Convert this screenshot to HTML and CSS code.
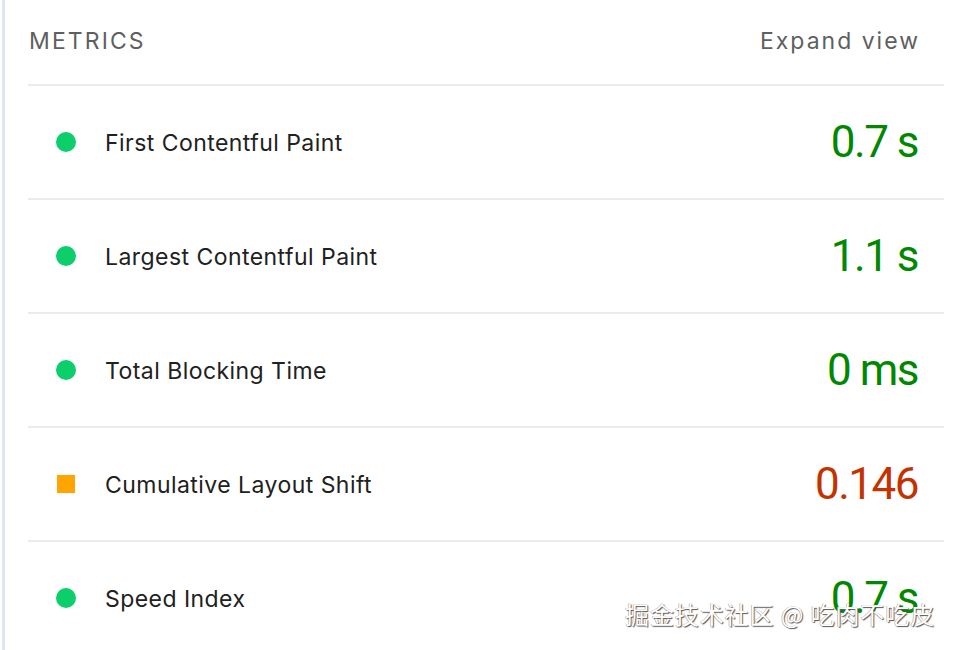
FILE: index.html
```html
<!DOCTYPE html>
<html>
<head>
<meta charset="utf-8">
<link rel="stylesheet" href="styles.css">
</head>
<body>
<div class="panel">
  <div class="header">
    <div class="title">METRICS</div>
    <div class="toggle">Expand view</div>
  </div>
  <div class="metric">
    <span class="ind ind-pass"></span>
    <span class="label">First Contentful Paint</span>
    <span class="value pass">0.7 s</span>
  </div>
  <div class="metric">
    <span class="ind ind-pass"></span>
    <span class="label">Largest Contentful Paint</span>
    <span class="value pass">1.1 s</span>
  </div>
  <div class="metric">
    <span class="ind ind-pass"></span>
    <span class="label">Total Blocking Time</span>
    <span class="value pass">0 ms</span>
  </div>
  <div class="metric">
    <span class="ind ind-average"></span>
    <span class="label">Cumulative Layout Shift</span>
    <span class="value average">0.146</span>
  </div>
  <div class="metric">
    <span class="ind ind-pass"></span>
    <span class="label">Speed Index</span>
    <span class="value pass">0.7 s</span>
  </div>
</div>
<div class="watermark">掘金技术社区 @ 吃肉不吃皮</div>
</body>
</html>
```
FILE: styles.css
```css
html, body {
  margin: 0;
  padding: 0;
  background: #ffffff;
  overflow: hidden;
  height: 650px;
}
body {
  font-family: Inter, Roboto, "Liberation Sans", Arial, sans-serif;
  position: relative;
}
.panel {
  margin-left: 2px;
  border-left: 3px solid #dce6f8;
  padding: 0 10px 0 23px;
  height: 650px;
  box-sizing: border-box;
}
.header {
  display: flex;
  align-items: center;
  justify-content: space-between;
  height: 82px;
  padding: 0 24px 2px 1px;
  border-bottom: 2px solid #ebebeb;
}
.title {
  font-size: 23px;
  letter-spacing: 2.1px;
  color: #5f5f5f;
}
.toggle {
  font-size: 23px;
  letter-spacing: 2px;
  color: #5f5f5f;
}
.metric {
  display: flex;
  align-items: center;
  height: 112px;
  border-bottom: 2px solid #ebebeb;
  padding: 0 26px 0 28px;
}
.ind {
  flex: none;
  width: 20px;
  height: 20px;
  margin-right: 29px;
}
.ind-pass {
  background: #0cce6b;
  border-radius: 50%;
}
.ind-average {
  width: 18px;
  height: 18px;
  margin-left: 1px;
  margin-right: 30px;
  background: #ffa400;
}
.label {
  flex: 1;
  padding-top: 2px;
  font-size: 23px;
  letter-spacing: 0.45px;
  color: #212121;
}
.value {
  font-family: Roboto, "Liberation Sans", Arial, sans-serif;
  font-size: 44px;
  letter-spacing: -1.5px;
}
.pass { color: #008800; }
.average { color: #c33300; }
.watermark {
  position: absolute;
  left: 625px;
  top: 598px;
  font-family: "Noto Sans CJK SC", sans-serif;
  font-size: 24px;
  letter-spacing: 0.9px;
  line-height: 32px;
  color: #ffffff;
  text-shadow: 1px 1px 1px #555, -0.5px -0.5px 0 #999;
  white-space: nowrap;
}
```
